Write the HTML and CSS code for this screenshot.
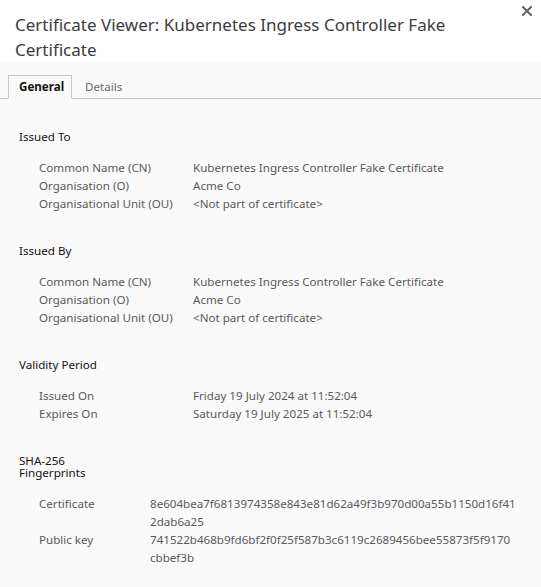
FILE: index.html
```html
<!DOCTYPE html>
<html>
<head>
<meta charset="utf-8">
<link rel="stylesheet" href="styles.css">
</head>
<body>
<div class="dialog">
  <header class="head">
    <h1 class="title">Certificate Viewer: Kubernetes Ingress Controller Fake Certificate</h1>
    <button class="close" aria-label="Close">
      <svg width="10" height="10" viewBox="0 0 10 10"><path d="M1 1L9 9M9 1L1 9" stroke="#5f6368" stroke-width="2" stroke-linecap="square"/></svg>
    </button>
  </header>
  <main class="body">
    <nav class="tabs">
      <span class="tab active">General</span>
      <span class="tab">Details</span>
    </nav>

    <section class="sect">
      <h2 class="sect-title">Issued To</h2>
      <div class="grid">
        <span class="lbl">Common Name (CN)</span><span class="val">Kubernetes Ingress Controller Fake Certificate</span>
        <span class="lbl">Organisation (O)</span><span class="val">Acme Co</span>
        <span class="lbl">Organisational Unit (OU)</span><span class="val">&lt;Not part of certificate&gt;</span>
      </div>
    </section>

    <section class="sect">
      <h2 class="sect-title">Issued By</h2>
      <div class="grid">
        <span class="lbl">Common Name (CN)</span><span class="val">Kubernetes Ingress Controller Fake Certificate</span>
        <span class="lbl">Organisation (O)</span><span class="val">Acme Co</span>
        <span class="lbl">Organisational Unit (OU)</span><span class="val">&lt;Not part of certificate&gt;</span>
      </div>
    </section>

    <section class="sect">
      <h2 class="sect-title">Validity Period</h2>
      <div class="grid">
        <span class="lbl">Issued On</span><span class="val">Friday 19 July 2024 at 11:52:04</span>
        <span class="lbl">Expires On</span><span class="val">Saturday 19 July 2025 at 11:52:04</span>
      </div>
    </section>

    <section class="sect fp">
      <h2 class="sect-title narrow">SHA-256 Fingerprints</h2>
      <div class="grid grid-fp">
        <span class="lbl">Certificate</span><span class="val hex"><span class="hl">8e604bea7f6813974358e843e81d62a49f3b970d00a55b1150d16f41</span><span class="hl">2dab6a25</span></span>
        <span class="lbl">Public key</span><span class="val hex"><span class="hl">741522b468b9fd6bf2f0f25f587b3c6119c2689456bee55873f5f9170</span><span class="hl">cbbef3b</span></span>
      </div>
    </section>
  </main>
</div>
</body>
</html>
```

FILE: styles.css
```css
* { box-sizing: border-box; }
html, body { margin: 0; padding: 0; }
body {
  font-family: "Noto Sans", "Open Sans", sans-serif;
  background: #f9f9f9;
  width: 541px;
  height: 587px;
  overflow: hidden;
}
.dialog { display: flex; flex-direction: column; }
.head {
  position: relative;
  background: #ffffff;
  padding: 12px 40px 0 15px;
  height: 62px;
}
.title {
  margin: 0;
  font-weight: 400;
  font-size: 17px;
  line-height: 25px;
  color: #3c3c3c;
}
.close {
  position: absolute;
  top: 6px;
  right: 9px;
  width: 10px;
  height: 10px;
  padding: 0;
  border: 0;
  background: none;
  display: flex;
}
.body { background: #f9f9f9; padding: 13px 0 0; }
.tabs {
  display: flex;
  padding-left: 8px;
  border-bottom: 1px solid #c6c6c6;
  height: 24px;
}
.tab {
  font-size: 11.6px;
  line-height: 24px;
  padding: 0 10px;
  color: #6b6b6b;
}
.tab.active {
  color: #111;
  font-weight: 700;
  border: 1px solid #c6c6c6;
  border-bottom: 1px solid #f9f9f9;
  background: #f9f9f9;
  line-height: 22px;
  padding: 0 10px;
  height: 24px;
  width: 64px;
}
.tab:not(.active) { padding-left: 13px; }
.sect { padding: 0 19px; margin-top: 29px; }
.sect + .sect { margin-top: 29px; }
.sect-title {
  margin: 0;
  font-size: 11.6px;
  font-weight: 400;
  line-height: 18px;
  color: #111;
}
.grid {
  display: grid;
  grid-template-columns: 154px 1fr;
  margin-top: 13px;
  padding-left: 20px;
  font-size: 11.6px;
  line-height: 18px;
  color: #5a5a5a;
}
.fp { margin-top: 32px !important; }
.narrow { width: 70px; line-height: 12px; }
.grid-fp { grid-template-columns: 111px 1fr; margin-top: 16px; }
.hl { display: block; }
```
